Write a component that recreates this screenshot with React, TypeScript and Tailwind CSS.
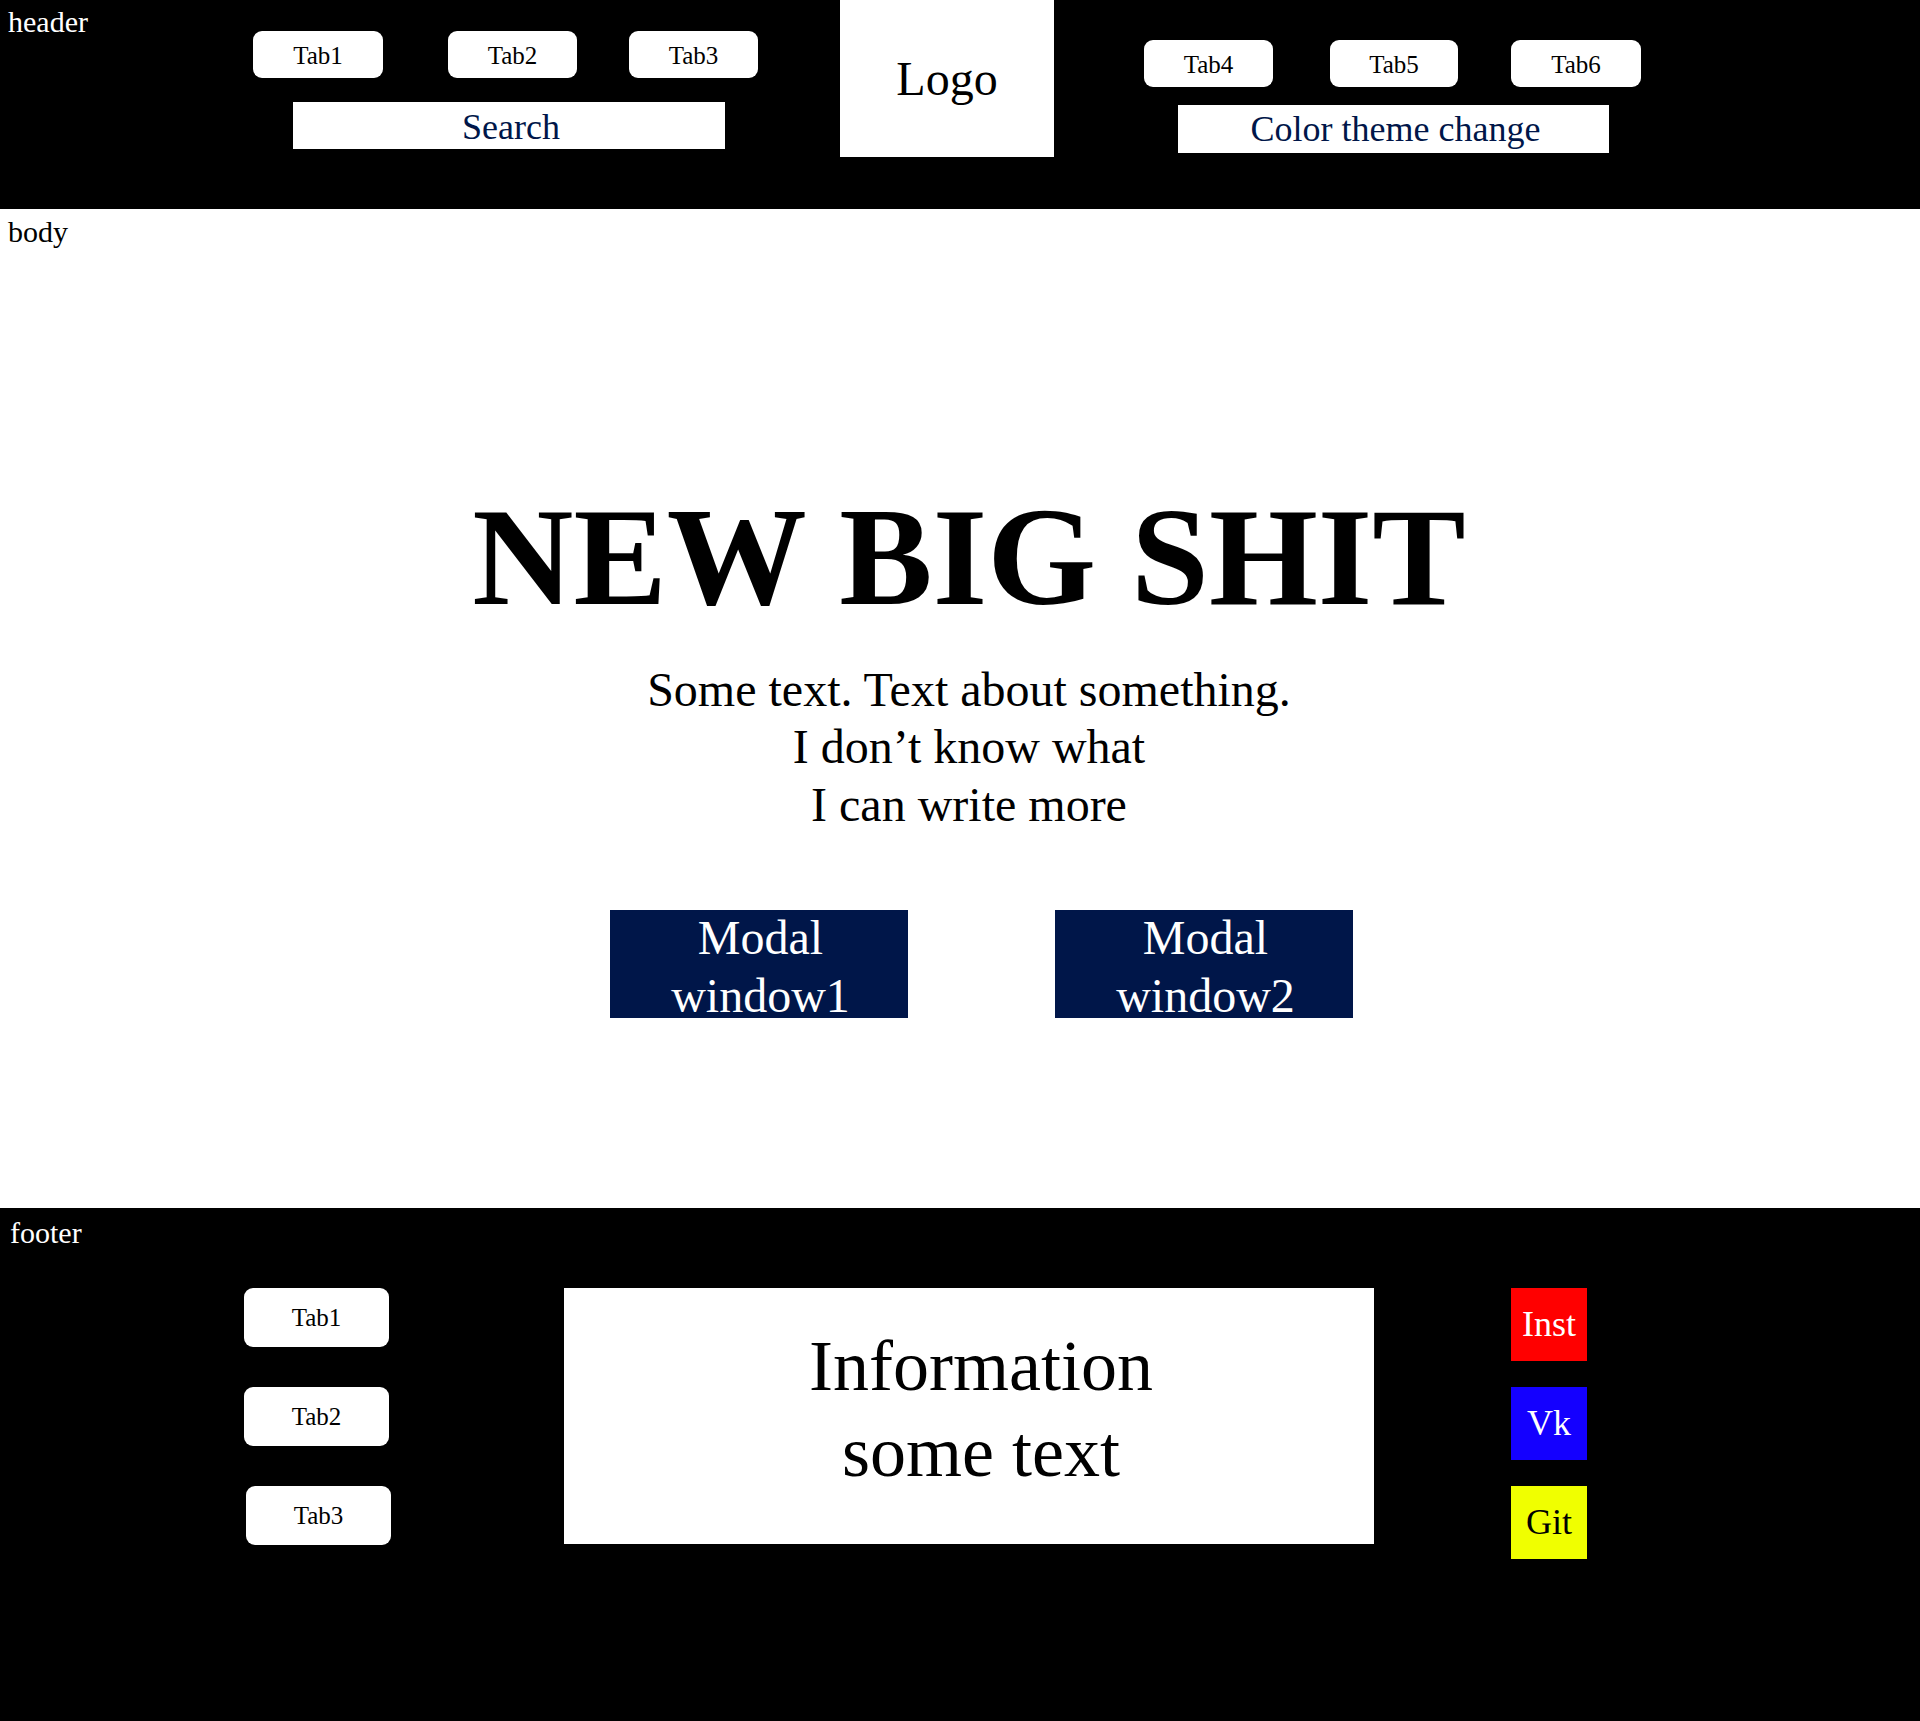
const tabs = ["Tab1", "Tab2", "Tab3"]
const socials = [
  { name: "Inst", cls: "bg-[#ff0000] text-white" },
  { name: "Vk", cls: "bg-[#1400ff] text-white" },
  { name: "Git", cls: "bg-[#f0ff00] text-black" },
]

function HeaderTab({ label, className }: { label: string; className: string }) {
  return (
    <button className={"flex h-[47px] items-center justify-center rounded-[9px] bg-white pt-[2px] text-[25px] leading-none text-black " + className}>
      {label}
    </button>
  )
}

export default function App() {
  return (
    <div className="w-[1920px] font-['Liberation_Serif','Times_New_Roman',serif]">
      {/* header */}
      <header className="flex h-[209px] bg-black text-white">
        <div className="w-[253px] shrink-0 pl-[8px] pt-[5px] text-[30px] leading-[1.15]">header</div>
        <div className="w-[505px] shrink-0 pt-[31px]">
          <div className="flex">
            <HeaderTab label="Tab1" className="w-[130px]" />
            <HeaderTab label="Tab2" className="ml-[65px] w-[129px]" />
            <HeaderTab label="Tab3" className="ml-[52px] w-[129px]" />
          </div>
          <div className="ml-[40px] mt-[24px] flex h-[47px] w-[432px] items-center justify-center bg-white pl-[4px] pt-[2px] text-[36px] leading-none text-[#001649]">
            Search
          </div>
        </div>
        <div className="ml-[82px] flex h-[157px] w-[214px] shrink-0 items-center justify-center bg-white text-[48px] leading-none text-black">
          Logo
        </div>
        <div className="ml-[90px] pt-[40px]">
          <div className="flex">
            <HeaderTab label="Tab4" className="w-[129px]" />
            <HeaderTab label="Tab5" className="ml-[57px] w-[128px]" />
            <HeaderTab label="Tab6" className="ml-[53px] w-[130px]" />
          </div>
          <div className="ml-[34px] mt-[18px] flex h-[48px] w-[431px] items-center justify-center bg-white pl-[4px] text-[36px] leading-none text-[#001649]">
            Color theme change
          </div>
        </div>
      </header>

      {/* body */}
      <main className="h-[999px] bg-white text-black">
        <div className="pl-[8px] pt-[6px] text-[30px] leading-[1.15]">body</div>
        <div className="flex flex-col items-center pl-[18px]">
          <h1 className="mt-[226px] text-[140px] font-bold leading-[1.15]">NEW BIG SHIT</h1>
          <p className="mt-[24px] text-center text-[48px] leading-[1.2]">
            Some text. Text about something.
            <br />
            I don’t know what
            <br />
            I can write more
          </p>
          <div className="mt-[77px] flex gap-[147px] pl-[24px]">
            <button className="flex h-[108px] w-[298px] items-center justify-center bg-[#001649] pl-[4px] pt-[5px] text-center text-[48px] leading-[1.2] text-white">
              Modal
              <br />
              window1
            </button>
            <button className="flex h-[108px] w-[298px] items-center justify-center bg-[#001649] pl-[4px] pt-[5px] text-center text-[48px] leading-[1.2] text-white">
              Modal
              <br />
              window2
            </button>
          </div>
        </div>
      </main>

      {/* footer */}
      <footer className="h-[513px] bg-black text-white">
        <div className="pl-[10px] pt-[8px] text-[30px] leading-[1.15]">footer</div>
        <div className="mt-[37px] flex items-start">
          <div className="ml-[244px] flex w-[145px] shrink-0 flex-col gap-[40px]">
            {tabs.map((t, idx) => (
              <button
                key={t}
                className={"flex h-[59px] w-[145px] items-center justify-center rounded-[9px] bg-white text-[25px] leading-none text-black " + (idx === 2 ? "ml-[2px]" : "")}
              >
                {t}
              </button>
            ))}
          </div>
          <div className="ml-[175px] h-[256px] w-[810px] shrink-0 bg-white pl-[24px] pt-[35px] text-center text-[72px] leading-[1.2] text-black">
            Information
            <br />
            some text
          </div>
          <div className="ml-[137px] flex flex-col gap-[26px]">
            {socials.map(s => (
              <a key={s.name} className={"flex h-[73px] w-[76px] items-center justify-center text-[36px] leading-none " + s.cls}>
                {s.name}
              </a>
            ))}
          </div>
        </div>
      </footer>
    </div>
  )
}
